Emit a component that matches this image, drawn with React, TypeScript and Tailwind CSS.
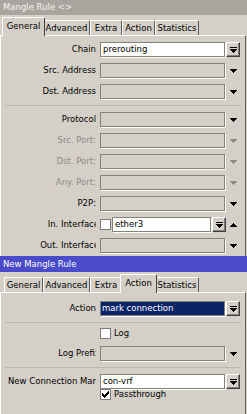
const TABS: { name: string; w: string; wa: string }[] = [
  { name: "General", w: "w-[39px]", wa: "w-[43px]" },
  { name: "Advanced", w: "w-[47px]", wa: "w-[51px]" },
  { name: "Extra", w: "w-[32px]", wa: "w-[36px]" },
  { name: "Action", w: "w-[33px]", wa: "w-[37px]" },
  { name: "Statistics", w: "w-[44px]", wa: "w-[48px]" },
];

function Tri({ up, gray }: { up?: boolean; gray?: boolean }) {
  return (
    <svg width="7" height="4" viewBox="0 0 7 4" shapeRendering="crispEdges" className={gray ? "fill-[#8c8a86]" : "fill-black"}>
      <path d={up ? "M3 0h1v1H3zM2 1h3v1H2zM1 2h5v1H1zM0 3h7v1H0z" : "M0 0h7v1H0zM1 1h5v1H1zM2 2h3v1H2zM3 3h1v1H3z"} />
    </svg>
  );
}

function DropBtn() {
  return (
    <div className="ml-[1px] flex h-[15px] w-[14px] items-center justify-center border border-b-[#404040] border-l-white border-r-[#404040] border-t-white bg-[#d4d0c8] shadow-[inset_-1px_-1px_0_#808080]">
      <svg width="7" height="6" viewBox="0 0 7 6" shapeRendering="crispEdges" className="fill-black">
        <path d="M0 0h7v1H0zM0 2h7v1H0zM1 3h5v1H1zM2 4h3v1H2zM3 5h1v1H3z" />
      </svg>
    </div>
  );
}

function Field({ value, white, selected, w = "w-[125px]" }: { value?: string; white?: boolean; selected?: boolean; w?: string }) {
  return (
    <div
      className={`flex h-[15px] ${w} items-center overflow-hidden whitespace-nowrap border border-[#85827c] shadow-[1px_1px_0_#ffffff] ${
        selected ? "bg-[#0b2468] pl-[1px] text-white" : white ? "bg-white pl-[2px] text-black" : "bg-[#d4d0c8]"
      }`}
    >
      {value}
    </div>
  );
}

function Check({ checked }: { checked?: boolean }) {
  return (
    <div className="flex h-[11px] w-[11px] shrink-0 items-center justify-center border border-[#7d7b77] bg-white">
      {checked && (
        <svg width="7" height="7" viewBox="0 0 7 7" shapeRendering="crispEdges" className="fill-black">
          <path d="M6 0h1v3H6zM5 1h1v3H5zM4 2h1v3H4zM3 3h1v3H3zM2 4h1v3H2zM1 3h1v3H1zM0 2h1v3H0z" />
        </svg>
      )}
    </div>
  );
}

function Row({ label, gray, clip, children }: { label: string; gray?: boolean; clip?: string; children: React.ReactNode }) {
  return (
    <div className="flex h-[15px] items-center">
      <div className={`w-[95px] shrink-0 overflow-hidden whitespace-nowrap text-right ${gray ? "text-[#8c8a86]" : "text-black"}`}>
        <span className={`inline-block ${clip ?? ""}`}>{label}</span>
      </div>
      <div className="ml-[4px] flex items-center">{children}</div>
    </div>
  );
}

function Arrow({ up, gray }: { up?: boolean; gray?: boolean }) {
  return (
    <div className="ml-[5px] flex items-center">
      <Tri up={up} gray={gray} />
    </div>
  );
}

function Sep() {
  return <div className="ml-[4px] h-px w-[236px] bg-[#bcb8b0]" />;
}

function TabStrip({ active }: { active: string }) {
  return (
    <div className="flex h-[20px] items-end pl-[4px]">
      {TABS.map((t) =>
        t.name === active ? (
          <div
            key={t.name}
            className={`relative z-10 -mx-[2px] -mb-px flex h-[19px] ${t.wa} items-center justify-center rounded-tr-[2px] border-l border-r border-t border-l-white border-r-[#404040] border-t-white bg-[#d4d0c8] pb-[1px]`}
          >
            {t.name}
          </div>
        ) : (
          <div
            key={t.name}
            className={`flex h-[15px] ${t.w} items-center justify-center rounded-tr-[2px] border-l border-r border-t border-l-white border-r-[#5a5a5a] border-t-white bg-[#d4d0c8]`}
          >
            {t.name}
          </div>
        )
      )}
    </div>
  );
}

export default function App() {
  return (
    <div className="h-[414px] w-[247px] overflow-hidden bg-[#d4d0c8] font-['DejaVu_Sans',sans-serif] text-[8.5px] leading-none text-black">
      {/* first window */}
      <div className="flex h-[15px] items-center bg-[#a9a59e] pl-[3px] text-[#f2f2f0]">Mangle Rule &lt;&gt;</div>
      <TabStrip active="General" />
      <div className="flex h-[221px] w-[246px] flex-col gap-[6px] border-l border-r border-t border-l-white border-r-[#5e5e5e] border-t-white pt-[6px]">
        <Row label="Chain">
          <Field value="prerouting" white />
          <DropBtn />
        </Row>
        <Row label="Src. Address">
          <Field />
          <Arrow />
        </Row>
        <Row label="Dst. Address">
          <Field />
          <Arrow />
        </Row>
        <Sep />
        <Row label="Protocol">
          <Field />
          <Arrow />
        </Row>
        <Row label="Src. Port:" gray>
          <Field />
          <Arrow gray />
        </Row>
        <Row label="Dst. Port:" gray>
          <Field />
          <Arrow gray />
        </Row>
        <Row label="Any. Port:" gray>
          <Field />
          <Arrow gray />
        </Row>
        <Row label="P2P:">
          <Field />
          <Arrow />
        </Row>
        <Row label="In. Interface" clip="-mr-[3px]">
          <Check />
          <div className="ml-[1px]">
            <Field value="ether3" white w="w-[99px]" />
          </div>
          <DropBtn />
          <div className="ml-[4px] flex items-center">
            <Tri up />
          </div>
        </Row>
        <Row label="Out. Interface" clip="-mr-[3px]">
          <Field />
          <Arrow />
        </Row>
      </div>

      {/* second window */}
      <div className="flex h-[16px] items-center bg-[#4a4bcb] pl-[3px] text-white">New Mangle Rule</div>
      <TabStrip active="Action" />
      <div className="flex h-[122px] w-[246px] flex-col border-l border-r border-t border-l-white border-r-[#5e5e5e] border-t-white pt-[8px]">
        <Row label="Action">
          <Field value="mark connection" selected />
          <DropBtn />
        </Row>
        <div className="mt-[6px]">
          <Sep />
        </div>
        <div className="mt-[3px] flex h-[15px] items-center pl-[99px]">
          <Check />
          <span className="ml-[3px]">Log</span>
        </div>
        <div className="mt-[5px]">
          <Row label="Log Prefix" clip="-mr-[4px]">
            <Field />
            <Arrow />
          </Row>
        </div>
        <div className="mt-[6px]">
          <Sep />
        </div>
        <div className="mt-[6px]">
          <Row label="New Connection Mark" clip="-mr-[5px]">
            <Field value="con-vrf" white />
            <DropBtn />
          </Row>
        </div>
        <div className="flex h-[11px] items-center pl-[99px]">
          <Check checked />
          <span className="ml-[3px]">Passthrough</span>
        </div>
      </div>
    </div>
  );
}
